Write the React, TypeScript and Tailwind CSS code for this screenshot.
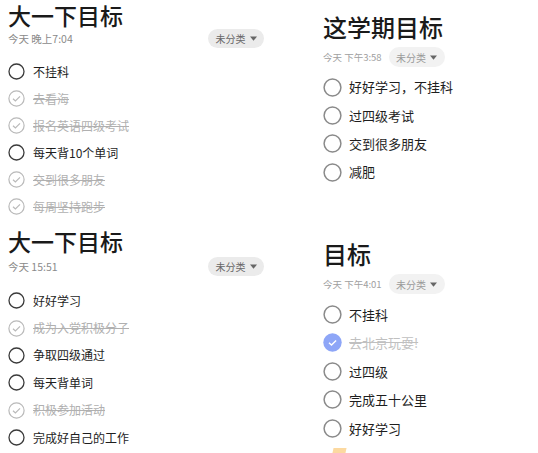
import React from "react";

type Item = { text: string; done?: boolean };

const font = { fontFamily: '"Noto Sans CJK SC", "Noto Sans", sans-serif' };

function Tri() {
  return (
    <svg width="7" height="5" viewBox="0 0 7 5" className="ml-[4px]">
      <path d="M0 0.5h7L3.5 4.8z" fill="currentColor" />
    </svg>
  );
}

function SmallCheck({ item }: { item: Item }) {
  if (item.done) {
    return (
      <svg width="17" height="17" viewBox="0 0 17 17" className="shrink-0">
        <circle cx="8.5" cy="8.5" r="7.6" fill="none" stroke="#b9b9b9" strokeWidth="1.2" />
        <path d="M5 8.7l2.4 2.3 4.6-4.6" fill="none" stroke="#b9b9b9" strokeWidth="1.2" />
      </svg>
    );
  }
  return (
    <svg width="17" height="17" viewBox="0 0 17 17" className="shrink-0">
      <circle cx="8.5" cy="8.5" r="7.5" fill="none" stroke="#3a3a3a" strokeWidth="1.3" />
    </svg>
  );
}

function BigCheck({ item }: { item: Item }) {
  if (item.done) {
    return (
      <svg width="19" height="19" viewBox="0 0 19 19" className="shrink-0">
        <circle cx="9.5" cy="9.5" r="9.2" fill="#8ea6f7" />
        <path d="M6 9.8l2.5 2.3 4.6-4.6" fill="none" stroke="#fff" strokeWidth="1.4" />
      </svg>
    );
  }
  return (
    <svg width="19" height="19" viewBox="0 0 19 19" className="shrink-0">
      <circle cx="9.5" cy="9.5" r="8.4" fill="none" stroke="#8a8a8a" strokeWidth="1.5" />
    </svg>
  );
}

function LeftCard({ title, date, items, rowH, metaGap, listGap }: { title: string; date: string; items: Item[]; rowH: string; metaGap: string; listGap: string }) {
  return (
    <div className="w-[264px] pl-[8px]">
      <div className="h-[28px] text-[23px] leading-[30px] font-medium text-[#1a1a1a]">{title}</div>
      <div className={`flex h-[19px] items-center justify-between ${metaGap}`}>
        <span className="text-[10.5px] text-[#8a8a8a]">{date}</span>
        <span className="flex h-[19px] w-[56px] items-center justify-center rounded-full bg-[#ebebeb] text-[10px] text-[#666]">
          未分类
          <Tri />
        </span>
      </div>
      <div className={listGap}>
        {items.map((it) => (
          <div key={it.text} className={`flex items-center ${rowH}`}>
            <SmallCheck item={it} />
            <span
              className={
                "ml-[8px] text-[12px] " +
                (it.done ? "text-[#b0b0b0] line-through decoration-[#b0b0b0]" : "text-[#1e1e1e]")
              }
            >
              {it.text}
            </span>
          </div>
        ))}
      </div>
    </div>
  );
}

function RightCard({ title, date, items, rowH }: { title: string; date: string; items: Item[]; rowH: string }) {
  return (
    <div className="pl-[23px]">
      <div className="h-[28px] text-[24px] leading-[28px] font-medium text-[#1a1a1a]">{title}</div>
      <div className="mt-[6px] flex h-[20px] items-center">
        <span className="text-[9.5px] text-[#a0a0a0]">{date}</span>
        <span className="ml-[7px] flex h-[20px] w-[56px] items-center justify-center rounded-full bg-[#f2f2f2] text-[10px] text-[#9a9a9a]">
          未分类
          <span className="text-[#666]">
            <Tri />
          </span>
        </span>
      </div>
      <div className="mt-[6px]">
        {items.map((it) => (
          <div key={it.text} className={`flex items-center ${rowH}`}>
            <BigCheck item={it} />
            <span
              className={
                "ml-[7px] text-[13px] " +
                (it.done ? "text-[#c0c0c0] line-through decoration-[#c0c0c0]" : "text-[#1e1e1e]")
              }
            >
              {it.text}
            </span>
          </div>
        ))}
      </div>
    </div>
  );
}

export default function App() {
  return (
    <div className="flex h-[453px] w-[538px] overflow-hidden bg-white" style={font}>
      <div className="w-[300px]">
        <LeftCard
          title="大一下目标"
          date="今天 晚上7:04"
          rowH="h-[27px]"
          metaGap="mt-[1px]"
          listGap="mt-[10px]"
          items={[
            { text: "不挂科" },
            { text: "去看海", done: true },
            { text: "报名英语四级考试", done: true },
            { text: "每天背10个单词" },
            { text: "交到很多朋友", done: true },
            { text: "每周坚持跑步", done: true },
          ]}
        />
        <div className="mt-[6px]">
          <LeftCard
            title="大一下目标"
            date="今天 15:51"
            rowH="h-[27.4px]"
            metaGap="mt-[3px]"
            listGap="mt-[11px]"
            items={[
              { text: "好好学习" },
              { text: "成为入党积极分子", done: true },
              { text: "争取四级通过" },
              { text: "每天背单词" },
              { text: "积极参加活动", done: true },
              { text: "完成好自己的工作" },
            ]}
          />
        </div>
      </div>
      <div className="flex-1 pt-[13px]">
        <RightCard
          title="这学期目标"
          date="今天 下午3:58"
          rowH="h-[28.3px]"
          items={[
            { text: "好好学习，不挂科" },
            { text: "过四级考试" },
            { text: "交到很多朋友" },
            { text: "减肥" },
          ]}
        />
        <div className="mt-[54px]">
          <RightCard
            title="目标"
            date="今天 下午4:01"
            rowH="h-[28.5px]"
            items={[
              { text: "不挂科" },
              { text: "去北京玩耍!", done: true },
              { text: "过四级" },
              { text: "完成五十公里" },
              { text: "好好学习" },
            ]}
          />
        </div>
        <div className="ml-[33px] mt-[5px] h-[5px] w-[13px] -skew-x-12 bg-[#fcd9a0]" />
      </div>
    </div>
  );
}
